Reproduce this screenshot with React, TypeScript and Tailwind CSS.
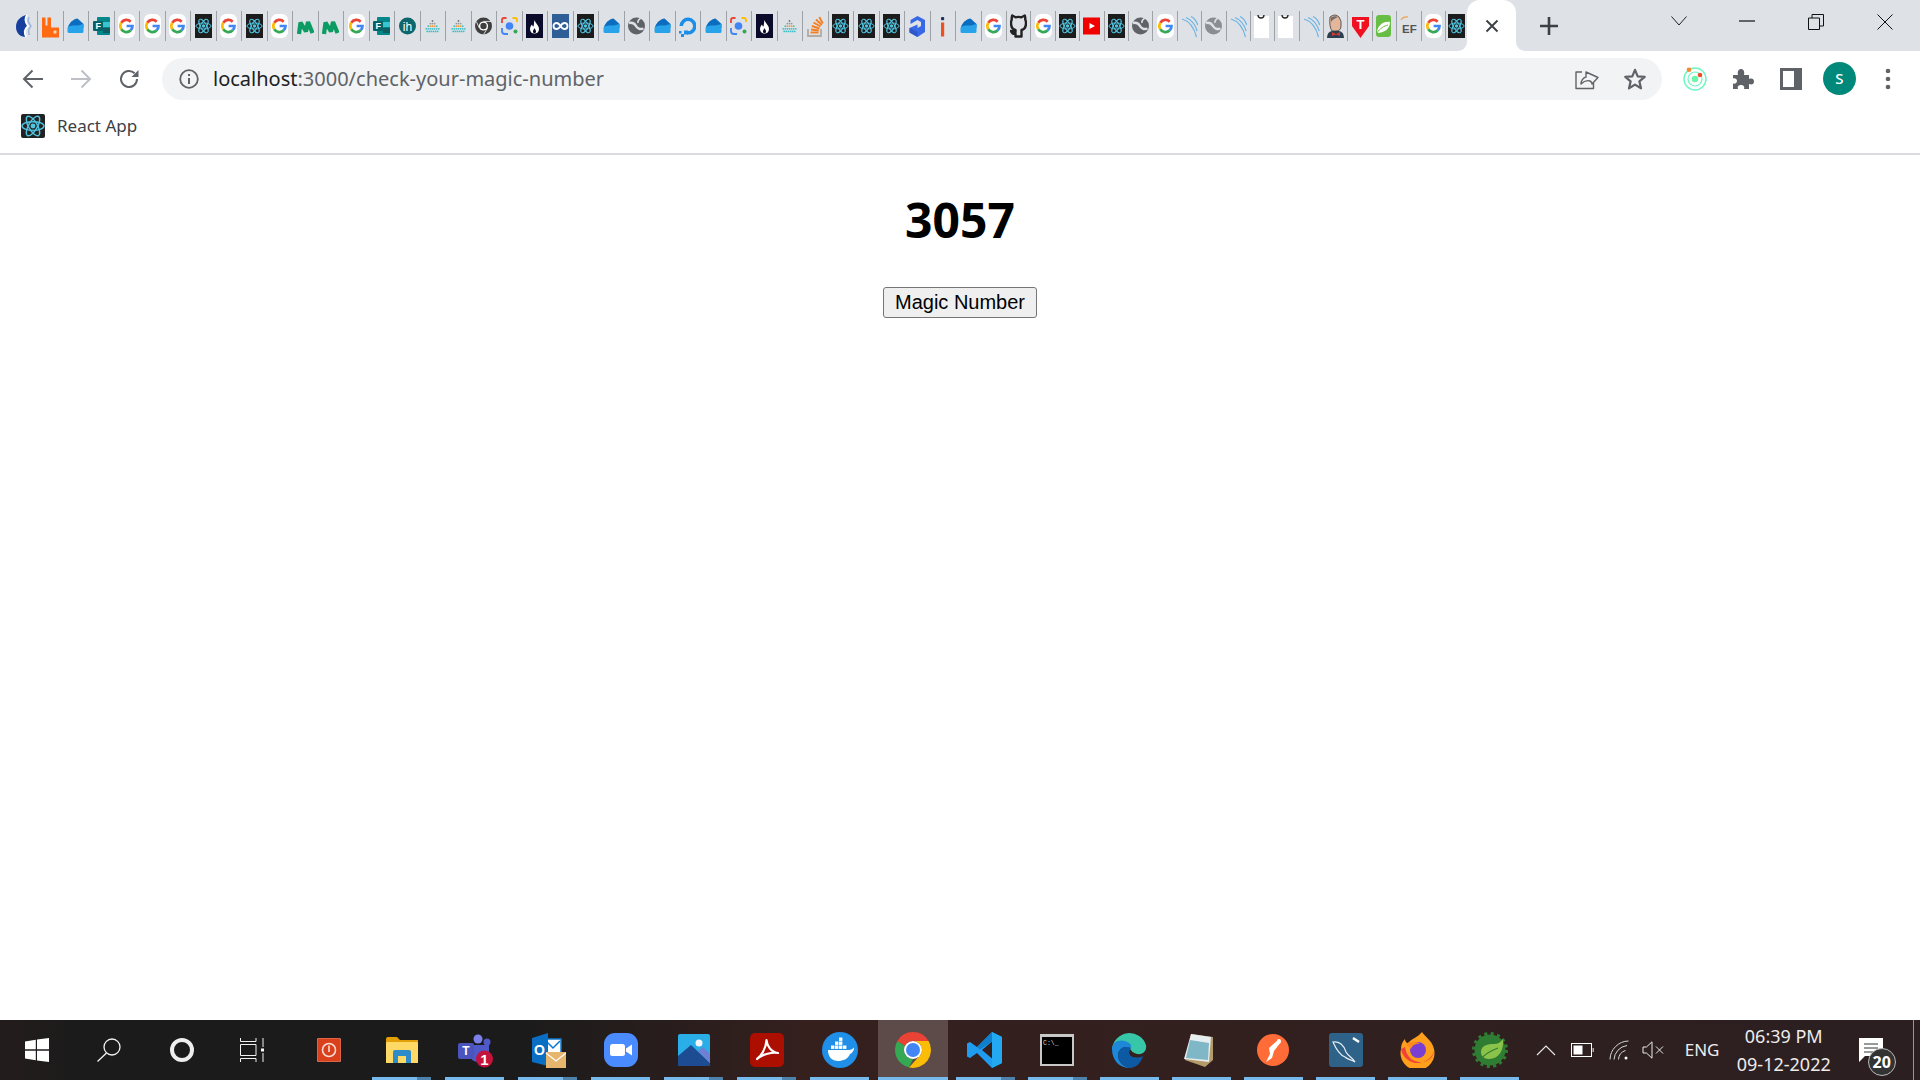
// Favicons of the tab strip: all sit in a 17x24 box.
function Fav({ children }: { children: React.ReactNode }) {
  return (
    <svg viewBox="0 0 17 24" className="h-[24px] w-[17px] shrink-0">
      {children}
    </svg>
  );
}

function GIcon() {
  return (
    <Fav>
      <rect width="17" height="24" rx="6" fill="#fff" />
      <g fill="none" strokeWidth="2.7">
        <path d="M3.3 8.8A6 6 0 0 1 12.7 7.7" stroke="#ea4335" />
        <path d="M3.3 8.8A6 6 0 0 0 3.3 15.2" stroke="#fbbc05" />
        <path d="M3.3 15.2A6 6 0 0 0 12.7 16.3" stroke="#34a853" />
        <path d="M12.7 16.3A6 6 0 0 0 14.5 12H8.6" stroke="#4285f4" />
      </g>
    </Fav>
  );
}

function Atom({ cx = 8.5, cy = 12, k = 1 }: { cx?: number; cy?: number; k?: number }) {
  return (
    <g fill="none" stroke="#4fc3e0" strokeWidth={1 * k}>
      <ellipse cx={cx} cy={cy} rx={7.6 * k} ry={3 * k} />
      <ellipse cx={cx} cy={cy} rx={7.6 * k} ry={3 * k} transform={`rotate(60 ${cx} ${cy})`} />
      <ellipse cx={cx} cy={cy} rx={7.6 * k} ry={3 * k} transform={`rotate(120 ${cx} ${cy})`} />
      <circle cx={cx} cy={cy} r={1.7 * k} fill="#4fc3e0" stroke="none" />
    </g>
  );
}

function ReactIcon() {
  return (
    <Fav>
      <rect width="17" height="24" fill="#1c1c1c" />
      <Atom />
    </Fav>
  );
}

function Cloud() {
  return (
    <Fav>
      <path d="M1 13C2 9 7 4.5 10.5 4.5L16.5 10V14H1Z" fill="#0b6cc0" />
      <path d="M.5 14.5C.5 12.5 3 12 5 11.5H11L16.5 10V17.5Q16.5 19 15 19H2Q.5 19 .5 17.5Z" fill="#28a3ea" />
    </Fav>
  );
}

function Forms() {
  return (
    <Fav>
      <rect x="4" y="3" width="13" height="18" rx="1" fill="#04878b" />
      <rect x="10" y="8" width="7" height="5" fill="#37c6d0" />
      <rect x="10" y="14" width="7" height="5" fill="#0f5e62" />
      <rect x="0" y="7" width="10" height="10" rx="1" fill="#05646a" />
      <text x="2.4" y="15" fontSize="9" fontWeight="700" fill="#fff" fontFamily="Liberation Sans, sans-serif">
        F
      </text>
    </Fav>
  );
}

function Rabbit() {
  return (
    <Fav>
      <path d="M0 3.5H3.5V11.5H5.5V3.5H9V13.5H17V23.5H0Z" fill="#ff6a13" />
      <rect x="11.5" y="16.5" width="3" height="3" fill="#ffd2b0" />
    </Fav>
  );
}

function Biz() {
  return (
    <Fav>
      <path d="M11 1C4 2 0 7 0 13C0 19 4 23 10 23C8 18 8 16 12 12C9 8 8 5 11 1Z" fill="#163f9e" />
      <path d="M11 1C8 5 9 8 12 12C8 16 8 18 10 23" fill="none" stroke="#fff" strokeWidth="1.8" />
      <path d="M13 3C11.5 6 12 9 15 12C12.5 15 12 18 13.5 21" fill="none" stroke="#9fb7da" strokeWidth="1.6" />
    </Fav>
  );
}

function Wave() {
  return (
    <Fav>
      <path d="M2 20L3.5 8.5L9 17.5L11 8L15.5 19" fill="none" stroke="#0c9b62" strokeWidth="4.2" strokeLinejoin="bevel" />
    </Fav>
  );
}

function Ih() {
  return (
    <Fav>
      <circle cx="8.5" cy="12" r="8.5" fill="#0c666b" />
      <text x="8.5" y="16.5" textAnchor="middle" fontSize="12" fill="#fff" fontFamily="Liberation Sans, sans-serif">
        ih
      </text>
    </Fav>
  );
}

function Tri() {
  const rows = [
    [8.5],
    [6.4, 8.5, 10.6],
    [4.3, 6.4, 8.5, 10.6, 12.7],
    [2.2, 4.3, 6.4, 8.5, 10.6, 12.7, 14.8],
    [3.2, 5.3, 7.4, 9.5, 11.6, 13.7],
  ];
  return (
    <Fav>
      {rows.map((r, i) =>
        r.map((x) => (
          <circle
            key={`${i}-${x}`}
            cx={x}
            cy={7 + i * 2.6}
            r=".9"
            fill={i === 2 && x > 5 && x < 12 ? "#f59a3c" : i === 0 ? "#777" : i === 1 ? "#9a9a9a" : "#3cc0c8"}
          />
        ))
      )}
    </Fav>
  );
}

function ChromeGrey() {
  return (
    <Fav>
      <circle cx="8.5" cy="12" r="8.5" fill="#3f3f3f" />
      <circle cx="8.5" cy="12" r="4.6" fill="#fff" />
      <circle cx="8.5" cy="12" r="3.2" fill="#3f3f3f" />
      <path d="M8.5 7.4H16M4.5 14.3L1.5 8M12.5 14.3L8.5 20.5" stroke="#fff" strokeWidth=".8" />
    </Fav>
  );
}

function Lens() {
  return (
    <Fav>
      <g fill="none" strokeWidth="1.8">
        <path d="M1 9V6Q1 4 3 4H5.5" stroke="#ea4335" />
        <path d="M11.5 4H14Q16 4 16 6V8" stroke="#fbbc05" />
        <path d="M1 14V17Q1 20 4 20H7" stroke="#4285f4" />
      </g>
      <circle cx="8.5" cy="12" r="3.8" fill="#4285f4" />
      <circle cx="14.5" cy="17.5" r="2" fill="#34a853" />
    </Fav>
  );
}

function Flame() {
  return (
    <Fav>
      <rect width="17" height="24" fill="#0a0a2a" />
      <path d="M8.5 6C9 9 13 11 13 15C13 18 11 19.5 8.5 19.5C6 19.5 4 18 4 15C4 13 5 12 6 10.5C6.5 12 7 12.5 7.5 12.5C8 10.5 8 8 8.5 6Z" fill="#fff" />
      <path d="M8.5 14C9 15.5 10 16 10 17.5C10 18.5 9.5 19 8.5 19C7.5 19 7 18.5 7 17.5C7 16 8 15.5 8.5 14Z" fill="#0a0a2a" />
    </Fav>
  );
}

function InfinityIcon() {
  return (
    <Fav>
      <rect width="17" height="24" fill="#2f5d96" />
      <path d="M8.5 12C7 9.5 5.8 9 4.5 9C3 9 1.5 10 1.5 12C1.5 14 3 15 4.5 15C5.8 15 7 14.5 8.5 12C10 9.5 11.2 9 12.5 9C14 9 15.5 10 15.5 12C15.5 14 14 15 12.5 15C11.2 15 10 14.5 8.5 12Z" fill="none" stroke="#fff" strokeWidth="1.8" />
    </Fav>
  );
}

function Globe({ c = "#5f6368" }: { c?: string }) {
  return (
    <Fav>
      <circle cx="8.5" cy="12" r="8.5" fill={c} />
      <path d="M1 9C5 8 7 10 8 12C9 14 12 16 15.5 14.5" fill="none" stroke="#dee1e6" strokeWidth="2.4" />
      <path d="M14 3.5C11 5 9.5 7 10 9" fill="none" stroke="#dee1e6" strokeWidth="1.6" />
    </Fav>
  );
}

function BlueQ() {
  return (
    <Fav>
      <path d="M8 20.5A8.5 8.5 0 1 0 .5 12H4A5 5 0 1 1 8 17Z" fill="#1a8ee8" />
      <rect x="5" y="16.5" width="4" height="4" fill="#1a8ee8" />
      <rect x="2" y="20" width="3" height="3" fill="#1a8ee8" />
      <rect x="0" y="17" width="2.5" height="2.5" fill="#1a8ee8" />
    </Fav>
  );
}

function Stack() {
  return (
    <Fav>
      <path d="M1 15V22H14V15" fill="none" stroke="#b3aca4" strokeWidth="1.8" />
      <g stroke="#f48024" strokeWidth="1.9">
        <path d="M3.5 18.5H11.5" />
        <path d="M4 15.5L11.8 16.5" />
        <path d="M4.8 12L12.5 14.5" />
        <path d="M6.5 8.5L13.5 12.5" />
        <path d="M9 5.5L14.8 11" />
        <path d="M12.3 3L15.8 9.5" />
      </g>
    </Fav>
  );
}

function Hex() {
  return (
    <Fav>
      <path d="M8.5 2L16 6V18L8.5 23L.5 18.5V14L8.5 10.5V14L12 12V8L8.5 6L1.5 10V6Z" fill="#3768e6" />
      <path d="M.5 14L8.5 18V23L.5 18.5Z" fill="#2c58cc" />
    </Fav>
  );
}

function IGlyph() {
  return (
    <Fav>
      <rect x="7" y="3" width="3.2" height="3.2" rx="1" fill="#1d3557" />
      <rect x="7" y="8.5" width="3.2" height="14" fill="#f1501e" />
    </Fav>
  );
}

function Github() {
  return (
    <Fav>
      <path d="M2.2 1.5L5.5 3.3Q8.5 2.5 11.5 3.3L14.8 1.5Q15.5 4 15.2 5.5Q16 7 16 9Q16 15 11.5 16V22.5H5.5V19.5Q2 20.5 1 17Q3 17.5 5.5 18V16Q1 15 1 9Q1 7 1.8 5.5Q1.5 4 2.2 1.5Z" fill="none" stroke="#222" strokeWidth="2.4" strokeLinejoin="round" />
    </Fav>
  );
}

function YouTube() {
  return (
    <Fav>
      <rect y="3.5" width="17" height="17" fill="#f20000" />
      <path d="M6.5 9L12 12L6.5 15Z" fill="#fff" />
    </Fav>
  );
}

function Arcs() {
  return (
    <Fav>
      <g fill="none" stroke="#6db4e4" strokeWidth="1.2">
        <path d="M1 5C8 7 13 13 15.5 23" />
        <path d="M5 3.5C10 5.5 14 10 16.2 17" />
        <path d="M10 2.5C13 4 15.5 7 16.8 11" />
      </g>
    </Fav>
  );
}

function Paper() {
  return (
    <Fav>
      <rect y="2" width="15" height="22" fill="#fff" />
      <path d="M4 1C4 5 10 5 10 1" fill="none" stroke="#2b2b2b" strokeWidth="1.4" />
    </Fav>
  );
}

function Jenkins() {
  return (
    <Fav>
      <path d="M3 3Q8 -1 12 3Q15 7 14 12Q14 17 9 17H5Q2 13 3 3Z" fill="#e3b79c" stroke="#3a3a3a" strokeWidth=".8" />
      <path d="M4 3.5Q8 1.5 11 3C9 4 6 5 4 8Z" fill="#6d6d6d" />
      <path d="M0 24Q0 18 5 17H12Q17 18 17 24Z" fill="#2c3e50" />
      <path d="M5 18L9 20L13 18V22L9 20.5L5 22Z" fill="#d33833" />
    </Fav>
  );
}

function TShield() {
  return (
    <Fav>
      <path d="M0 3H17V12L8.5 24L0 12Z" fill="#f0101f" />
      <text x="8.5" y="15" textAnchor="middle" fontSize="13" fontWeight="700" fill="#fff" fontFamily="Liberation Sans, sans-serif">
        T
      </text>
    </Fav>
  );
}

function Spring() {
  return (
    <Fav>
      <rect y="1" width="15" height="22" rx="3" fill="#68bd45" />
      <path d="M1 19C1 12 7 7 14 8C14 15 8 19 1 19Z" fill="#fff" />
      <path d="M1 19C4 14 8 12 12 11" fill="none" stroke="#68bd45" strokeWidth="1" />
    </Fav>
  );
}

function EF() {
  return (
    <Fav>
      <path d="M1 6Q3 2.5 8 3" fill="none" stroke="#f2a04a" strokeWidth="1.2" />
      <text x="2" y="19" fontSize="11.5" fontWeight="700" fill="#555" fontFamily="Liberation Sans, sans-serif">
        EF
      </text>
    </Fav>
  );
}

const TABS: React.ReactNode[] = [
  <Biz />, <Rabbit />, <Cloud />, <Forms />, <GIcon />, <GIcon />, <GIcon />, <ReactIcon />, <GIcon />, <ReactIcon />,
  <GIcon />, <Wave />, <Wave />, <GIcon />, <Forms />, <Ih />, <Tri />, <Tri />, <ChromeGrey />, <Lens />,
  <Flame />, <InfinityIcon />, <ReactIcon />, <Cloud />, <Globe />, <Cloud />, <BlueQ />, <Cloud />, <Lens />, <Flame />,
  <Tri />, <Stack />, <ReactIcon />, <ReactIcon />, <ReactIcon />, <Hex />, <IGlyph />, <Cloud />, <GIcon />, <Github />,
  <GIcon />, <ReactIcon />, <YouTube />, <ReactIcon />, <Globe />, <GIcon />, <Arcs />, <Globe c="#8a8d91" />, <Arcs />, <Paper />,
  <Paper />, <Arcs />, <Jenkins />, <TShield />, <Spring />, <EF />, <GIcon />, <ReactIcon />,
];

// The first tabs are a bit wider than the later ones, the last has no separator
function tabClass(i: number) {
  const base = "flex h-[30px] shrink-0 items-center justify-center";
  if (i < 39) return `${base} w-[25.5px] border-r-[1.5px] border-[#9ea1a6]`;
  if (i < 57) return `${base} w-[24.4px] border-r-[1.5px] border-[#9ea1a6]`;
  return `${base} w-[21px]`;
}

function TabStrip() {
  return (
    <div className="flex h-[51px] shrink-0 items-center bg-[#dee1e6] pl-[12.5px]">
      {TABS.map((icon, i) => (
        <div key={i} className={tabClass(i)}>
          {icon}
        </div>
      ))}
      <div className="relative flex h-[51px] w-[49px] shrink-0 items-center justify-center rounded-t-[13px] bg-white">
        <div className="absolute bottom-0 left-[-9px] h-[9px] w-[9px] bg-white">
          <div className="h-full w-full rounded-br-[9px] bg-[#dee1e6]" />
        </div>
        <div className="absolute bottom-0 right-[-9px] h-[9px] w-[9px] bg-white">
          <div className="h-full w-full rounded-bl-[9px] bg-[#dee1e6]" />
        </div>
        <svg viewBox="0 0 14 14" className="h-[14px] w-[14px]">
          <path d="M1.5 1.5L12.5 12.5M12.5 1.5L1.5 12.5" stroke="#3c4043" strokeWidth="1.9" />
        </svg>
      </div>
      <svg viewBox="0 0 20 20" className="ml-[23px] h-[20px] w-[20px] shrink-0">
        <path d="M10 1V19M1 10H19" stroke="#3c4043" strokeWidth="2.6" />
      </svg>
      <div className="ml-auto flex h-full items-start">
        <svg viewBox="0 0 16 10" className="mr-[52px] mt-[16px] h-[10px] w-[16px]">
          <path d="M.5 .5L8 9L15.5 .5" fill="none" stroke="#202124" strokeWidth="1" />
        </svg>
        <svg viewBox="0 0 16 2" className="mr-[53px] mt-[20px] h-[2px] w-[16px]">
          <path d="M0 1H16" stroke="#111" strokeWidth="1.2" />
        </svg>
        <svg viewBox="0 0 16 16" className="mr-[53px] mt-[14px] h-[16px] w-[16px]">
          <path d="M.5 4H11.5V15.5H.5ZM4 4V.5H15.5V12H11.5" fill="none" stroke="#111" strokeWidth="1" />
        </svg>
        <svg viewBox="0 0 16 16" className="mr-[27px] mt-[14px] h-[16px] w-[16px]">
          <path d="M.5 .5L15.5 15.5M15.5 .5L.5 15.5" stroke="#111" strokeWidth="1" />
        </svg>
      </div>
    </div>
  );
}

function Toolbar() {
  return (
    <div className="flex h-[52px] shrink-0 items-center bg-white pl-[22px] pt-[3px]">
      <svg viewBox="0 0 22 20" className="h-[20px] w-[22px] shrink-0">
        <path d="M21 10H2M10.5 1.5L2 10L10.5 18.5" fill="none" stroke="#5f6368" strokeWidth="2" />
      </svg>
      <svg viewBox="0 0 22 20" className="ml-[26px] h-[20px] w-[22px] shrink-0">
        <path d="M1 10H20M11.5 1.5L20 10L11.5 18.5" fill="none" stroke="#bdc1c6" strokeWidth="2" />
      </svg>
      <svg viewBox="0 0 22 22" className="ml-[26px] h-[22px] w-[22px] shrink-0">
        <path d="M19 11A8 8 0 1 1 16.6 5.3" fill="none" stroke="#5f6368" strokeWidth="2" />
        <path d="M20.5 2V9H13.5Z" fill="#5f6368" />
      </svg>
      <div className="ml-[22px] flex h-[42px] w-[1500px] shrink-0 items-center rounded-full bg-[#f1f3f4] pl-[17px] pr-[16px]">
        <svg viewBox="0 0 20 20" className="h-[20px] w-[20px] shrink-0">
          <circle cx="10" cy="10" r="8.8" fill="none" stroke="#5f6368" strokeWidth="1.8" />
          <path d="M10 9V15M10 5V7" stroke="#5f6368" strokeWidth="2" />
        </svg>
        <div className="ml-[14px] font-['Noto_Sans',sans-serif] text-[20px] text-[#5f6368]">
          <span className="text-[#202124]">localhost</span>:3000/check-your-magic-number
        </div>
        <svg viewBox="0 0 24 22" className="ml-auto h-[22px] w-[24px] shrink-0">
          <path d="M7 4H1V20.5H18.5V15M11 9V4L23 9.5L17 16C17 14.5 16 13.5 15 13C12 12 9 13 6 16C6 13 8 9.5 11 9Z" fill="none" stroke="#5f6368" strokeWidth="1.4" strokeLinejoin="round" />
        </svg>
        <svg viewBox="0 0 22 22" className="ml-[25px] h-[22px] w-[22px] shrink-0">
          <path d="M11 1.8L13.7 8.3L20.7 8.8L15.4 13.4L17 20.3L11 16.6L5 20.3L6.6 13.4L1.3 8.8L8.3 8.3Z" fill="none" stroke="#5f6368" strokeWidth="2.2" strokeLinejoin="round" />
        </svg>
      </div>
      <svg viewBox="0 0 24 24" className="ml-[21px] h-[24px] w-[24px] shrink-0">
        <circle cx="12" cy="12" r="11" fill="none" stroke="#6df5c0" strokeWidth="1.4" />
        <circle cx="12" cy="12" r="7" fill="none" stroke="#6df5c0" strokeWidth="1.2" />
        <circle cx="12" cy="12" r="3.3" fill="#6df5a8" />
        <circle cx="6" cy="2.8" r="2.3" fill="#f58a2c" />
        <circle cx="17" cy="8" r="2.3" fill="#ee4d2d" />
      </svg>
      <svg viewBox="0 0 22 22" className="ml-[25px] h-[22px] w-[22px] shrink-0">
        <path d="M1 7H6C5 3 7 1 9 1C11 1 13 3 12 7H17V11C20 10 22 11 22 13.5C22 16 20 17 17 16V21H12C13 18 11 17 9 17C7 17 5 18 6 21H1V15.5C3 16 5 15 5 13C5 11 3 10 1 10.5Z" fill="#5f6368" />
      </svg>
      <svg viewBox="0 0 22 22" className="ml-[26px] h-[22px] w-[22px] shrink-0">
        <path d="M0 0H22V22H0ZM3 3V19H14V3Z" fill="#5f6368" fillRule="evenodd" />
      </svg>
      <div className="ml-[21px] flex h-[33px] w-[33px] shrink-0 items-center justify-center rounded-full bg-[#00897b] font-['Noto_Sans',sans-serif] text-[15px] font-medium text-white">
        S
      </div>
      <svg viewBox="0 0 6 22" className="ml-[29px] h-[22px] w-[6px] shrink-0">
        <circle cx="3" cy="3" r="2.3" fill="#5f6368" />
        <circle cx="3" cy="11" r="2.3" fill="#5f6368" />
        <circle cx="3" cy="19" r="2.3" fill="#5f6368" />
      </svg>
    </div>
  );
}

function BookmarkBar() {
  return (
    <div className="flex h-[52px] shrink-0 items-center border-b-2 border-[#dadce0] bg-white pb-[5px] pl-[21px]">
      <svg viewBox="0 0 24 24" className="h-[24px] w-[24px] shrink-0">
        <rect width="24" height="24" rx="2" fill="#222" />
        <Atom cx={12} cy={12} k={1.45} />
      </svg>
      <span className="ml-[12px] font-['Noto_Sans',sans-serif] text-[17px] text-[#3c4043]">React App</span>
    </div>
  );
}

type Run = { wide?: boolean; split?: boolean; narrow?: boolean };

// Taskbar button. Up to Chrome the slots are 73px, after it 72px.
function Slot({ children, run, active, narrow }: { children: React.ReactNode; run?: Run; active?: boolean; narrow?: boolean }) {
  return (
    <div className={`flex h-full shrink-0 justify-center ${narrow ? "w-[72.1px]" : "w-[73px]"}`}>
      <div className={`flex h-full w-[70px] flex-col items-center ${active ? "bg-[#5d4b49]" : ""}`}>
        <div className="flex min-h-0 flex-1 items-center justify-center pt-[3px]">{children}</div>
        <div className={`flex h-[3px] shrink-0 ${run ? (run.wide ? "w-[70px]" : "w-[59px]") : ""}`}>
          {run ? <div className="h-full flex-1 bg-[#76b9ed]" /> : null}
          {run && run.split ? <div className="h-full w-[14px] bg-[#4d82ad]" /> : null}
        </div>
      </div>
    </div>
  );
}

function TaskIcon({ children }: { children: React.ReactNode }) {
  return (
    <svg viewBox="0 0 36 36" className="h-[36px] w-[36px]">
      {children}
    </svg>
  );
}

function Taskbar() {
  return (
    <div className="flex h-[60px] shrink-0 items-stretch bg-[linear-gradient(90deg,#241c1c_0%,#1b1b1b_4%,#1b1b1b_27%,#35201e_42%,#32201f_65%,#2b1f21_100%)]">
      <Slot>
        <svg viewBox="0 0 24 24" className="h-[24px] w-[24px]">
          <path d="M0 3.4L10.8 1.8V11.3H0ZM12 1.6L24 0V11.3H12ZM0 12.7H10.8V22.2L0 20.6ZM12 12.7H24V24L12 22.4Z" fill="#fff" />
        </svg>
      </Slot>
      <Slot>
        <svg viewBox="0 0 24 24" className="mr-[1px] h-[24px] w-[24px]">
          <circle cx="15" cy="9" r="8" fill="none" stroke="#f3f3f3" strokeWidth="1.3" />
          <path d="M9.5 15L.5 23.5" stroke="#f3f3f3" strokeWidth="1.3" />
        </svg>
      </Slot>
      <Slot>
        <div className="mr-[2px] h-[24px] w-[24px] rounded-full border-[4px] border-[#eeeeee]" />
      </Slot>
      <Slot>
        <svg viewBox="0 0 24 24" className="mr-[7px] h-[24px] w-[24px]">
          <path d="M.5 0V3.5H16V0M.5 24V20.5H16V24M.5 6.5H16V17.5H.5ZM23 0V9M23 15V24" fill="none" stroke="#f3f3f3" strokeWidth="1" />
          <rect x="21" y="10.5" width="3.5" height="3" fill="#fff" />
        </svg>
      </Slot>
      <Slot>
        <svg viewBox="0 0 24 24" className="h-[24px] w-[24px]">
          <rect width="24" height="24" rx="2.5" fill="#d9401c" stroke="#e9b9a9" strokeWidth=".6" />
          <circle cx="12" cy="12" r="6.5" fill="none" stroke="#f9ddd4" strokeWidth="1.6" />
          <path d="M12 7.5V14" stroke="#f9ddd4" strokeWidth="1.6" />
        </svg>
      </Slot>
      <Slot run={{ split: true }}>
        <TaskIcon>
          <path d="M2 7Q2 5 4 5H13L16 8H34V31H2Z" fill="#e3a008" />
          <rect x="2" y="10" width="32" height="21" rx="1" fill="#ffd965" />
          <path d="M9 31V20Q9 18 11 18H25Q27 18 27 20V31H22V24H14V31Z" fill="#2e8bc9" />
        </TaskIcon>
      </Slot>
      <Slot run={{}}>
        <TaskIcon>
          <circle cx="21" cy="7" r="4.5" fill="#7b83eb" />
          <circle cx="30" cy="10" r="3.5" fill="#5059c9" />
          <path d="M13 13H32V24Q32 30 22 30Q13 30 13 22Z" fill="#5059c9" />
          <rect x="1" y="11" width="16" height="16" rx="2" fill="#4b53bc" />
          <text x="9" y="23" textAnchor="middle" fontSize="12" fontWeight="700" fill="#fff" fontFamily="Liberation Sans, sans-serif">T</text>
          <circle cx="27.5" cy="27" r="8.5" fill="#c4133c" />
          <text x="27.5" y="32.5" textAnchor="middle" fontSize="15" fontWeight="700" fill="#fff" fontFamily="Liberation Sans, sans-serif">1</text>
        </TaskIcon>
      </Slot>
      <Slot run={{ split: true }}>
        <TaskIcon>
          <rect x="15" y="7" width="16" height="14" fill="#fff" stroke="#0b78d0" strokeWidth="1.5" />
          <path d="M16 9L23 16L30 9" fill="none" stroke="#0b78d0" strokeWidth="1.5" />
          <path d="M2 6L18 1V34L2 30Z" fill="#0a6fc2" />
          <text x="9.5" y="23" textAnchor="middle" fontSize="14" fontWeight="700" fill="#fff" fontFamily="Liberation Sans, sans-serif">O</text>
          <rect x="16" y="20" width="20" height="16" fill="#e6b56e" />
          <path d="M16 21L26 29L36 21" fill="none" stroke="#fff" strokeWidth="1.2" />
        </TaskIcon>
      </Slot>
      <Slot run={{}}>
        <TaskIcon>
          <rect x="1" y="1" width="34" height="34" rx="11" fill="#4a8cff" />
          <rect x="7" y="12" width="15" height="12" rx="2.5" fill="#fff" />
          <path d="M23 16.5L29 12.5V23.5L23 19.5Z" fill="#fff" />
        </TaskIcon>
      </Slot>
      <Slot run={{ split: true }}>
        <TaskIcon>
          <rect x="2" y="2" width="32" height="32" rx="2" fill="#2aaee8" />
          <circle cx="23" cy="11" r="3.5" fill="#f2f6fb" />
          <path d="M2 33V24L15 13L34 31V34H3Z" fill="#1d4c93" />
          <path d="M22 19L27 15L34 22V31Z" fill="#6e7fd4" />
        </TaskIcon>
      </Slot>
      <Slot run={{ split: true }}>
        <TaskIcon>
          <rect x="1" y="1" width="34" height="34" rx="5" fill="#ac0f00" />
          <path d="M8 27C12 24 17 17 17.5 8C18 14 22 20 29 21C23 20 14 22 8 27Z" fill="none" stroke="#fff" strokeWidth="2.2" strokeLinejoin="round" />
        </TaskIcon>
      </Slot>
      <Slot run={{}}>
        <TaskIcon>
          <circle cx="18" cy="18" r="18" fill="#1f8fe8" />
          <path d="M6 18H27C29 18 31 17 32 15.5C32.5 16.5 31 21 28 22C26 27 21 29 16 29C10 29 6 25 6 18Z" fill="#fff" />
          <g fill="#fff">
            <rect x="9" y="13.5" width="3.4" height="3.4" />
            <rect x="13" y="13.5" width="3.4" height="3.4" />
            <rect x="17" y="13.5" width="3.4" height="3.4" />
            <rect x="21" y="13.5" width="3.4" height="3.4" />
            <rect x="13" y="9.5" width="3.4" height="3.4" />
            <rect x="17" y="9.5" width="3.4" height="3.4" />
            <rect x="17" y="5.5" width="3.4" height="3.4" />
          </g>
        </TaskIcon>
      </Slot>
      <Slot run={{ wide: true }} active>
        <TaskIcon>
          <path d="M18 0A18 18 0 0 1 33.6 9H18A9 9 0 0 0 10 13.9L2.4 9A18 18 0 0 1 18 0Z" fill="#ea4335" />
          <path d="M2.4 9L10 13.9A9 9 0 0 0 18 27L14 35.5A18 18 0 0 1 2.4 9Z" fill="#34a853" />
          <path d="M33.6 9A18 18 0 0 1 14 35.5L25.8 22.5A9 9 0 0 0 18 9Z" fill="#fbbc05" />
          <circle cx="18" cy="18" r="9" fill="#fff" />
          <circle cx="18" cy="18" r="7" fill="#4285f4" />
        </TaskIcon>
      </Slot>
      <Slot run={{ split: true }} narrow>
        <TaskIcon>
          <path d="M25 0L35 5V31L25 36L10 21L3 26L0 24.5V11.5L3 10L10 15ZM25 9.5L15 18L25 26.5Z" fill="#1f9cf0" />
          <path d="M25 0L35 5V31L25 36Z" fill="#23a9f2" />
          <path d="M25 9.5V0L10 15L13 17.5Z" fill="#0f7fcc" />
        </TaskIcon>
      </Slot>
      <Slot run={{ split: true }} narrow>
        <svg viewBox="0 0 34 32" className="h-[32px] w-[34px]">
          <rect width="34" height="32" fill="#c8c8c8" />
          <rect x="2" y="3" width="30" height="27" fill="#000" />
          <text x="3" y="11" fontSize="6.5" fill="#d8d8d8" fontFamily="Liberation Mono, monospace">C:\_</text>
        </svg>
      </Slot>
      <Slot run={{}} narrow>
        <TaskIcon>
          <path d="M1 17A17.5 17.5 0 0 1 35 13C36 19 32 23 26 22C18 20 20 14 14 14C7 14 1 18 1 17Z" fill="#37c6a8" />
          <path d="M1 17C1 10 8 7 14 9C20 11 21 14 20 16C17 14 9 14 7 22C6 28 12 35 19 36C8 36 1 28 1 17Z" fill="#1e88d8" />
          <path d="M19 36C12 35 6 28 7 22C9 14 17 14 20 16C17 20 18 24 22 25C26 26 31 25 32 24C30 31 25 36 19 36Z" fill="#0c59a4" />
        </TaskIcon>
      </Slot>
      <Slot run={{}} narrow>
        <TaskIcon>
          <path d="M8 2L30 5L30 28L22 35L2 28Z" fill="#b59a6a" />
          <path d="M8 2L28 5L26 30L1 27Z" fill="#e6eef0" />
          <path d="M7 8L26 11L25 28L3 26Z" fill="#7fb7c6" />
        </TaskIcon>
      </Slot>
      <Slot run={{}} narrow>
        <TaskIcon>
          <circle cx="18" cy="18" r="16" fill="#ff6c37" />
          <path d="M23 8L26 10L19 19L17 26L11 30L15 22L14 16Z" fill="#fff" />
          <circle cx="24" cy="9" r="2" fill="#fff" />
        </TaskIcon>
      </Slot>
      <Slot run={{}} narrow>
        <TaskIcon>
          <rect x="1" y="1" width="34" height="34" rx="3" fill="#2f6288" />
          <path d="M5 10C11 9 16 13 18 20C20 24 25 26 27 30C23 27 20 28 17 25C12 23 8 17 5 10Z" fill="none" stroke="#e8eef2" strokeWidth="1.2" />
          <path d="M25 6L31 10" stroke="#fff" strokeWidth="2.4" />
        </TaskIcon>
      </Slot>
      <Slot run={{}} narrow>
        <TaskIcon>
          <path d="M22 0C24 4 32 8 34 17A17 17 0 1 1 1 17C1 12 3 9 5 7C5 9 6 11 8 11C11 7 17 6 22 0Z" fill="#ff9f1c" />
          <path d="M1 17A17 17 0 0 0 34 19C33 27 26 31 19 30C10 29 6 22 5 15Z" fill="#f0413a" />
          <circle cx="18" cy="18" r="8" fill="#7a3fd1" />
          <path d="M6 12C10 9 17 9 20 12C15 11 12 14 11 17Z" fill="#ff8a1c" />
        </TaskIcon>
      </Slot>
      <Slot run={{}} narrow>
        <TaskIcon>
          <circle cx="18" cy="18" r="15.5" fill="#2f7d32" />
          <g stroke="#2f7d32" strokeWidth="3" strokeDasharray="3 3.5" fill="none">
            <circle cx="18" cy="18" r="16.5" />
          </g>
          <path d="M31 7C32 18 27 27 17 27C12 27 9 24 9 20C9 13 16 12 22 12C26 12 29 10 31 7Z" fill="#8bc34a" />
          <path d="M7 29C12 22 18 19 26 16" fill="none" stroke="#2f7d32" strokeWidth="1.2" />
        </TaskIcon>
      </Slot>
      <Tray />
    </div>
  );
}

function Tray() {
  return (
    <div className="relative flex min-w-0 flex-1 items-center pl-[10px] font-['Noto_Sans',sans-serif] text-[#ececec]">
      <svg viewBox="0 0 20 11" className="h-[11px] w-[20px] shrink-0">
        <path d="M1 10L10 1L19 10" fill="none" stroke="#ececec" strokeWidth="1.1" />
      </svg>
      <svg viewBox="0 0 24 14" className="ml-[15px] h-[14px] w-[24px] shrink-0">
        <rect x=".5" y=".5" width="20" height="13" fill="none" stroke="#fff" strokeWidth="1" />
        <rect x="2.5" y="2.5" width="9" height="9" fill="#fff" />
        <rect x="21.5" y="5" width="1.5" height="4" fill="#aaa" />
      </svg>
      <svg viewBox="0 0 20 20" className="ml-[14px] h-[20px] w-[20px] shrink-0">
        <g fill="none" stroke="#d8d8d8" strokeWidth="1">
          <path d="M1 19.5A19 19 0 0 1 19.5 1" />
          <path d="M5 19.5A15 15 0 0 1 18 5.5" />
          <path d="M9.5 19.5A10 10 0 0 1 16.5 10.5" />
        </g>
        <circle cx="17" cy="18" r="1.5" fill="#fff" />
      </svg>
      <svg viewBox="0 0 22 18" className="ml-[13px] h-[18px] w-[22px] shrink-0">
        <path d="M1 6H4.5L10 .8V17.2L4.5 12H1Z" fill="none" stroke="#ececec" strokeWidth="1" />
        <path d="M14 5.5L21 12.5M21 5.5L14 12.5" stroke="#ececec" strokeWidth="1" />
      </svg>
      <span className="ml-[21px] w-[34px] shrink-0 text-[17px]">ENG</span>
      <div className="ml-[15px] flex w-[100px] shrink-0 flex-col items-center gap-[4px] text-[18px] leading-[24px]">
        <span>06:39 PM</span>
        <span>09-12-2022</span>
      </div>
      <div className="relative ml-[25px] h-[24px] w-[24px] shrink-0">
        <svg viewBox="0 0 24 24" className="h-[24px] w-[24px]">
          <path d="M0 0H24V18H6L0 24Z" fill="#fff" />
          <path d="M5 6H19M5 10H19M5 14H14" stroke="#333" strokeWidth="1" />
        </svg>
        <div className="absolute left-[9px] top-[10px] flex h-[28px] w-[28px] items-center justify-center rounded-full border border-[#bbb] bg-[#333] text-[16px] font-bold text-white">
          20
        </div>
      </div>
      <div className="absolute bottom-0 right-[6px] top-0 w-px bg-[#9c9595]" />
    </div>
  );
}

export default function App() {
  return (
    <div className="flex h-[1080px] w-[1920px] flex-col overflow-hidden bg-white">
      <TabStrip />
      <Toolbar />
      <BookmarkBar />
      <main className="flex min-h-0 flex-1 flex-col items-center pt-[35px]">
        <h1 className="font-['Open_Sans',sans-serif] text-[48px] font-bold leading-[60px] text-black">3057</h1>
        <button className="mt-[37px] flex h-[31px] w-[154px] items-center justify-center rounded-[3px] border border-[#767676] bg-[#efefef] pb-[1px] font-['Liberation_Sans',sans-serif] text-[20px] text-black">
          Magic Number
        </button>
      </main>
      <Taskbar />
    </div>
  );
}
